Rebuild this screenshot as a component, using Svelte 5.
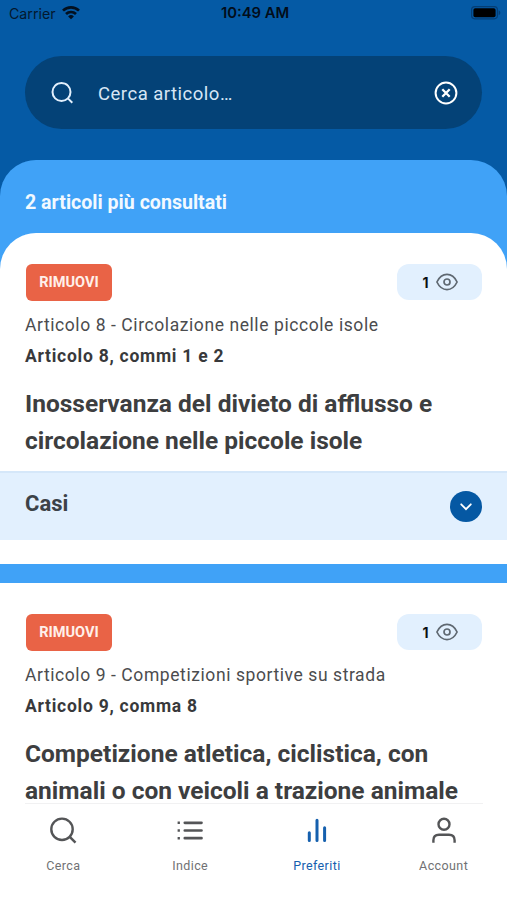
<script lang="ts">
	type Article = { id: number; name: string; ref: string; title: string[]; views: number; cases: boolean };

	const articles: Article[] = [
		{
			id: 8,
			name: 'Articolo 8 - Circolazione nelle piccole isole',
			ref: 'Articolo 8, commi 1 e 2',
			title: ['Inosservanza del divieto di afflusso e', 'circolazione nelle piccole isole'],
			views: 1,
			cases: true
		},
		{
			id: 9,
			name: 'Articolo 9 - Competizioni sportive su strada',
			ref: 'Articolo 9, comma 8',
			title: ['Competizione atletica, ciclistica, con', 'animali o con veicoli a trazione animale'],
			views: 1,
			cases: false
		}
	];

	const tabs = ['Cerca', 'Indice', 'Preferiti', 'Account'];
	let active = $state('Preferiti');
	let query = $state('');
</script>

<div class="screen">
	<div class="scroll">
		<div class="status">
			<div class="carrier">
				<span>Carrier</span>
				<svg width="18" height="14" viewBox="0 0 18 14" fill="none" stroke="#03101f" stroke-width="2.7">
					<path d="M1 4.6a11.5 11.5 0 0 1 16 0" />
					<path d="M4 8a7.2 7.2 0 0 1 10 0" />
					<path d="M6.1 10.500a4.100 4.100 0 0 1 5.800 0L9 13.300z" fill="#03101f" stroke="none" />
				</svg>
			</div>
			<span class="time">10:49 AM</span>
			<svg class="battery" width="30" height="14" viewBox="0 0 30 14">
				<rect x=".6" y=".6" width="25.8" height="12.2" rx="3.2" fill="none" stroke="#043e75" stroke-width="1.2" />
				<rect x="2.4" y="2.2" width="22.2" height="9" rx="1.8" fill="#000" />
				<path d="M27.6 4.2c2.3.8 2.3 4.2 0 5z" fill="#043e75" />
			</svg>
		</div>

		<div class="search">
			<svg width="24" height="24" viewBox="0 0 24 24" fill="none" stroke="#e3f0fd" stroke-width="2">
				<circle cx="10.500" cy="11" r="9" />
				<path d="M16.900 17.400l4.400 4.400" />
			</svg>
			<input type="text" placeholder="Cerca articolo…" bind:value={query} />
			<button class="clear" aria-label="Cancella" onclick={() => (query = '')}>
				<svg width="24" height="24" viewBox="0 0 24 24" fill="none" stroke="#fff" stroke-width="2">
					<circle cx="12" cy="12" r="10.4" />
					<path d="M8.300 8.300l7.400 7.400M15.700 8.300l-7.400 7.400" stroke-width="2.300" />
				</svg>
			</button>
		</div>

		<div class="panel">
			<h1>2 articoli più consultati</h1>
			{#each articles as article (article.id)}
				<article class="card">
					<div class="row">
						<button class="remove">RIMUOVI</button>
						<div class="views">
							<span>{article.views}</span>
							<svg width="22" height="18" viewBox="0 0 22 18" fill="none" stroke="#5f6871" stroke-width="1.700">
								<path d="M.9 9C3.2 4.2 6.6 1.4 11 1.4S18.800 4.200 21.100 9C18.800 13.800 15.400 16.600 11 16.600S3.200 13.800.9 9z" stroke-linejoin="round" />
								<circle cx="11" cy="9" r="3" />
							</svg>
						</div>
					</div>
					<p class="name">{article.name}</p>
					<p class="ref">{article.ref}</p>
					<h2>
						{#each article.title as line}
							<span>{line}</span>
						{/each}
					</h2>
					{#if article.cases}
						<div class="cases">
							<h3>Casi</h3>
							<button class="expand" aria-label="Apri">
								<svg width="12" height="8" viewBox="0 0 12 8" fill="none" stroke="#fff" stroke-width="1.8" stroke-linecap="round">
									<path d="M1.2 1.300L6 6.200l4.800-4.900" />
								</svg>
							</button>
						</div>
					{/if}
				</article>
			{/each}
		</div>
	</div>

	<nav>
		{#each tabs as tab}
			<button class="tab" class:active={tab === active} onclick={() => (active = tab)}>
				<svg width="30" height="30" viewBox="0 0 30 30" fill="none" stroke="currentColor" stroke-width="2.4">
					{#if tab === 'Cerca'}
						<circle cx="14" cy="13.300" r="10.700" />
						<path d="M21.500 20.700l6 6" />
					{:else if tab === 'Indice'}
						<path d="M9.800 6.800h16.700M9.800 14.500h16.700M9.800 22.200h16.700" stroke-linecap="round" stroke-width="2.700" />
						<path d="M2.600 6.800h2.300M2.600 14.500h2.300M2.600 22.200h2.300" />
					{:else if tab === 'Preferiti'}
						<path d="M7.300 16.800v7.700M15 4.300v20.200M22.600 11.800v12.700" stroke-width="3" stroke-linecap="round" />
					{:else}
						<circle cx="15" cy="8.200" r="5.500" />
						<path d="M4.400 26.800v-2.500c0-3.600 2-5.600 5.600-5.600h10c3.600 0 5.600 2 5.600 5.600v2.500" />
					{/if}
				</svg>
				<span>{tab}</span>
			</button>
		{/each}
	</nav>
</div>

<style>
	:global(body) {
		margin: 0;
	}

	.screen {
		display: flex;
		flex-direction: column;
		height: 900px;
		overflow: hidden;
		background: #fff;
		font-family: Roboto, sans-serif;
		color: #3d3e40;
	}

	button {
		border: 0;
		padding: 0;
		background: none;
		font-family: inherit;
		cursor: pointer;
	}

	svg {
		display: block;
		flex: none;
	}

	h1,
	h2,
	h3,
	p {
		margin: 0;
	}

	.scroll {
		height: 803px;
		overflow: hidden;
		background: #055aa5;
	}

	.status {
		display: grid;
		grid-template-columns: 1fr auto 1fr;
		align-items: center;
		box-sizing: border-box;
		height: 28px;
		padding: 0 6px 2px 9px;
		font-family: Inter, sans-serif;
		font-size: 14.2px;
		color: #03182e;
	}

	.carrier {
		display: flex;
		align-items: center;
		gap: 6px;
	}

	.time {
		font-size: 14.8px;
		font-weight: 600;
		color: #020d1a;
	}

	.battery {
		justify-self: end;
	}

	.search {
		display: flex;
		align-items: center;
		box-sizing: border-box;
		height: 73px;
		margin: 28px 25px 31px;
		padding: 0 24px 0 26px;
		border-radius: 37px;
		background: #044277;
	}

	.search input {
		flex: 1;
		min-width: 0;
		margin-left: 23px;
		padding: 2px 0 0;
		border: 0;
		outline: 0;
		background: none;
		font-family: inherit;
		font-size: 18.5px;
		letter-spacing: 0.5px;
		color: #d7e6f5;
	}

	.search input::placeholder {
		color: #d7e6f5;
	}

	.panel {
		border-radius: 36px 36px 0 0;
		background: #40a2f7;
	}

	h1 {
		height: 73px;
		padding: 0 25px;
		line-height: 86px;
		box-sizing: border-box;
		font-size: 19.6px;
		font-weight: 700;
		color: #f2f9ff;
	}

	.card {
		height: 331px;
		margin-bottom: 19px;
		box-sizing: border-box;
		padding-top: 31px;
		background: #fff;
	}

	h1 + .card {
		border-radius: 36px 36px 0 0;
	}

	.row {
		display: flex;
		justify-content: space-between;
		height: 36px;
		padding: 0 25px 0 26px;
	}

	.remove {
		width: 86px;
		height: 37px;
		border-radius: 6px;
		background: #e96346;
		font-size: 14.5px;
		font-weight: 700;
		color: #fff0ea;
	}

	.views {
		display: flex;
		align-items: center;
		justify-content: center;
		gap: 7px;
		box-sizing: border-box;
		width: 85px;
		height: 36px;
		padding-left: 1px;
		border-radius: 12px;
		background: #e2f0fe;
		font-family: Inter, sans-serif;
		font-size: 14px;
		font-weight: 700;
		color: #0b0f13;
	}

	.name,
	.ref {
		height: 30px;
		padding: 0 25px;
		line-height: 30px;
		font-size: 17.5px;
		white-space: nowrap;
	}

	.name {
		margin-top: 10px;
		letter-spacing: 0.58px;
		color: #4b4c4e;
	}

	.ref {
		line-height: 32px;
		font-weight: 700;
		letter-spacing: 0.74px;
		color: #38393b;
	}

	h2 {
		margin-top: 16px;
		padding: 0 25px;
		font-size: 24.5px;
		font-weight: 700;
		line-height: 36.5px;
		white-space: nowrap;
	}

	h2 span {
		display: block;
	}

	.cases {
		display: flex;
		justify-content: space-between;
		align-items: center;
		box-sizing: border-box;
		height: 69px;
		margin-top: 12px;
		padding: 0 25px;
		border-top: 2px solid #d5e7f9;
		background: #e2f0fe;
	}

	h3 {
		margin-top: -6px;
		font-size: 22px;
		font-weight: 700;
		color: #3c4248;
	}

	.expand {
		display: flex;
		align-items: center;
		justify-content: center;
		width: 32px;
		height: 31px;
		border-radius: 50%;
		background: #0558a3;
	}

	nav {
		display: grid;
		grid-template-columns: repeat(4, 1fr);
		height: 97px;
		background: linear-gradient(#f1f1f2, #f1f1f2) center top / 458px 1px no-repeat #fff;
	}

	.tab {
		display: flex;
		flex-direction: column;
		align-items: center;
		padding-top: 13px;
		color: #545557;
	}

	.tab span {
		margin-top: 11px;
		line-height: 18px;
		font-size: 12.5px;
		letter-spacing: 0.4px;
		color: #707173;
	}

	.tab.active,
	.tab.active span {
		color: #1560ae;
	}
</style>
